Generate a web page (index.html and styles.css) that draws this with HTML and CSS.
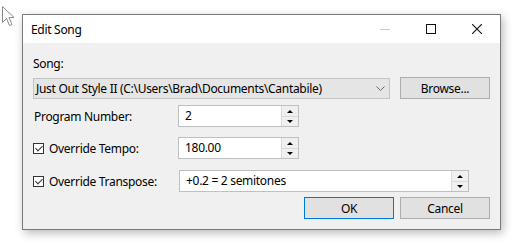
FILE: index.html
```html
<!DOCTYPE html>
<html lang="en">
<head>
    <meta charset="UTF-8">
    <title>Edit Song</title>
    <link rel="stylesheet" href="styles.css">
</head>
<body>
    <svg class="cursor" width="14" height="22" viewBox="0 0 14 22">
        <path d="M0.5 0.5 L0.5 16.5 L4.5 12.5 L7.5 19.5 L10 18.5 L7 11.5 L12 11.5 Z" fill="#fff" stroke="#8a8a8a" stroke-width="1"/>
    </svg>

    <div class="window">
        <div class="titlebar">
            <span class="title">Edit Song</span>
            <div class="title-buttons">
                <span class="tb tb-min"><svg width="10" height="10"><line x1="0" y1="5.5" x2="10" y2="5.5" stroke="#c8c8c8"/></svg></span>
                <span class="tb"><svg width="10" height="10"><rect x="0.5" y="0.5" width="9" height="9" fill="none" stroke="#111"/></svg></span>
                <span class="tb"><svg width="10" height="10"><path d="M0 0 L10 10 M10 0 L0 10" stroke="#111" stroke-width="1.1"/></svg></span>
            </div>
        </div>

        <div class="content">
            <div class="row row-label">Song:</div>

            <div class="row row-song">
                <div class="combo">
                    <span>Just Out Style II (C:\Users\Brad\Documents\Cantabile)</span>
                    <svg width="9" height="5"><path d="M0.5 0.5 L4.5 4.5 L8.5 0.5" fill="none" stroke="#666"/></svg>
                </div>
                <button class="btn">Browse...</button>
            </div>

            <div class="row row-field">
                <label class="field-label">Program Number:</label>
                <div class="spin-field small">
                    <span class="value">2</span>
                    <div class="spinner"><span class="up"></span><span class="down"></span></div>
                </div>
            </div>

            <div class="row row-field tempo">
                <label class="field-label"><span class="check"></span>Override Tempo:</label>
                <div class="spin-field small">
                    <span class="value">180.00</span>
                    <div class="spinner"><span class="up"></span><span class="down"></span></div>
                </div>
            </div>

            <div class="row row-field transpose">
                <label class="field-label"><span class="check"></span>Override Transpose:</label>
                <div class="spin-field wide">
                    <span class="value">+0.2 = 2 semitones</span>
                    <div class="spinner"><span class="up"></span><span class="down"></span></div>
                </div>
            </div>

            <div class="row actions">
                <button class="btn btn-default">OK</button>
                <button class="btn">Cancel</button>
            </div>
        </div>
    </div>
</body>
</html>
```

FILE: styles.css
```css
* {
    box-sizing: border-box;
    margin: 0;
    padding: 0;
}

body {
    font-family: "Noto Sans", "Open Sans", sans-serif;
    font-size: 12px;
    letter-spacing: -0.3px;
    color: #000;
    background: #fff;
    padding: 14px 0 0 22px;
    position: relative;
    width: 532px;
    height: 246px;
    overflow: hidden;
}

.cursor {
    position: absolute;
    left: 2px;
    top: 6px;
}

.window {
    width: 479px;
    height: 216px;
    border: 1px solid #7a7a7a;
    background: #f0f0f0;
    box-shadow: 2px 3px 9px rgba(0, 0, 0, 0.28);
}

.titlebar {
    height: 28px;
    background: #fff;
    display: flex;
    align-items: center;
    justify-content: space-between;
    padding-left: 8px;
}

.title {
    font-size: 12px;
}

.title-buttons {
    display: flex;
    height: 100%;
}

.tb {
    width: 46px;
    display: flex;
    align-items: center;
    justify-content: center;
}

.tb svg {
    display: block;
}

.content {
    padding: 13px 10px 0 10px;
}

.row {
    display: flex;
    align-items: center;
}

.row-label {
    height: 16px;
    line-height: 16px;
}

.row-song {
    margin-top: 5px;
    height: 22px;
    gap: 10px;
}

.combo {
    width: 357px;
    height: 21px;
    background: #e5e5e5;
    border: 1px solid #c4c4c4;
    display: flex;
    align-items: center;
    justify-content: space-between;
    padding: 0 4px 0 2px;
}

.btn {
    font-family: inherit;
    font-size: 12px;
    letter-spacing: inherit;
    width: 90px;
    height: 22px;
    background: #e1e1e1;
    border: 1px solid #adadad;
    color: #000;
}

.btn-default {
    border-color: #0078d7;
}

.row-field {
    margin-top: 6px;
    height: 22px;
}

.row-field.tempo {
    margin-top: 10px;
}

.row-field.transpose {
    margin-top: 11px;
}

.field-label {
    width: 145px;
    display: flex;
    align-items: center;
    padding-left: 1px;
}

.check {
    width: 11px;
    height: 11px;
    border: 1px solid #333;
    margin: 0 5px 0 -1px;
    position: relative;
    background: #fff;
}

.check::after {
    content: "";
    position: absolute;
    left: 3px;
    top: 0px;
    width: 3px;
    height: 6px;
    border-right: 1px solid #333;
    border-bottom: 1px solid #333;
    transform: rotate(45deg);
}

.spin-field {
    height: 22px;
    display: flex;
    border: 1px solid #c0c0c0;
    background: #fff;
}

.spin-field.small {
    width: 121px;
}

.spin-field.wide {
    width: 290px;
    margin-left: 1px;
}

.spin-field .value {
    flex: 1;
    padding-left: 6px;
    line-height: 20px;
}

.spinner {
    width: 17px;
    display: flex;
    flex-direction: column;
    background: #f0f0f0;
    border-left: 1px solid #dadada;
}

.spinner span {
    flex: 1;
    position: relative;
}

.spinner .up {
    border-bottom: 1px solid #dadada;
}

.spinner .up::after,
.spinner .down::after {
    content: "";
    position: absolute;
    left: 5px;
    width: 0;
    height: 0;
    border-left: 3px solid transparent;
    border-right: 3px solid transparent;
}

.spinner .up::after {
    top: 4px;
    border-bottom: 3px solid #000;
}

.spinner .down::after {
    top: 3px;
    border-top: 3px solid #000;
}

.actions {
    margin-top: 5px;
    justify-content: flex-end;
    gap: 6px;
}
```
